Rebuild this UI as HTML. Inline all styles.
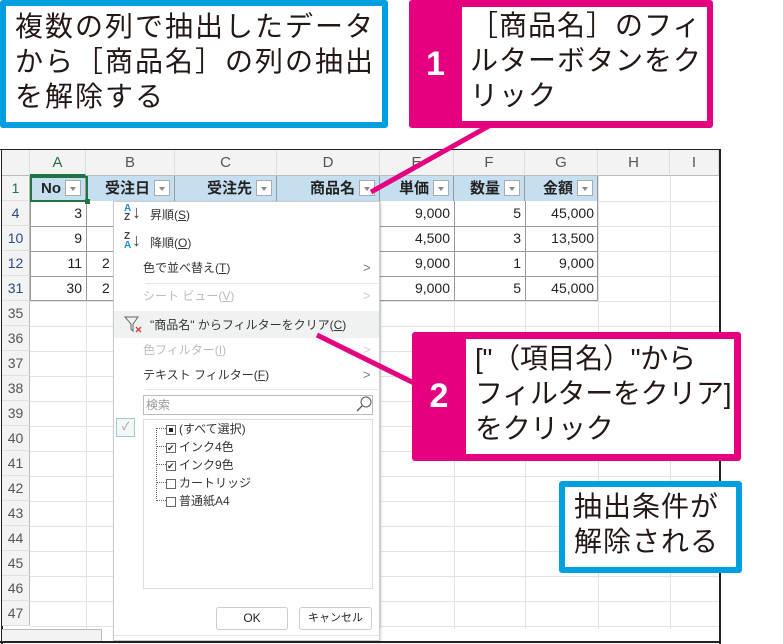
<!DOCTYPE html>
<html><head><meta charset="utf-8"><style>
*{margin:0;padding:0;box-sizing:border-box}
body{width:783px;height:644px;background:#fff;position:relative;overflow:hidden;font-family:"Liberation Sans","Noto Sans CJK JP",sans-serif;color:#222}
.a{position:absolute}
.callout{font-size:28px;line-height:35px;color:#231815;letter-spacing:0.5px}
.hdr{position:absolute;top:150px;height:26px;background:#f3f3f3;color:#555;font-size:15px;text-align:center;line-height:26px;border-right:1px solid #ddd;border-bottom:1px solid #bbb}
.rn{position:absolute;left:2px;width:28px;height:25px;background:#f3f3f3;color:#2b4a80;font-size:14px;text-align:center;line-height:25px;border-bottom:1px solid #e0e0e0;border-right:1px solid #bbb}
.gl{position:absolute;background:#e3e3e3}
.cell{position:absolute;height:25px;line-height:25px;font-size:14px;text-align:right;padding-right:4px;color:#222}
.th{position:absolute;top:176px;height:25px;background:#c5dff0;font-size:15px;font-weight:bold;line-height:25px;text-align:right;border-right:1px solid #999}
.dd{display:inline-block;width:16px;height:16px;border:1px solid #aaa;background:#fff;vertical-align:middle;margin:0 4px 2px 4px;position:relative}
.dd:after{content:"";position:absolute;left:4px;top:6px;border:3px solid transparent;border-top:4px solid #888}
.mi{position:absolute;left:143px;font-size:12px;color:#333;height:20px;line-height:20px}
.dis{color:#bbb}
.arr{position:absolute;left:363px;font-size:13px;color:#777}
.cb{display:inline-block;width:10px;height:10px;border:1px solid #666;vertical-align:middle;margin-right:3px;position:relative;background:#fff}
</style></head><body>

<div class="a" style="left:0;top:149px;width:721px;height:1px;background:#222"></div>
<div class="a" style="left:1px;top:149px;width:2px;height:495px;background:#222"></div>
<div class="a" style="left:719px;top:149px;width:2px;height:495px;background:#222"></div>
<div class="a" style="left:0;top:641px;width:721px;height:2px;background:#222"></div>

<div class="hdr" style="left:2px;width:28px"></div>
<div class="hdr" style="left:30px;width:56px;color:#217346;border-bottom:2px solid #217346">A</div>
<div class="hdr" style="left:86px;width:89px">B</div>
<div class="hdr" style="left:175px;width:102px">C</div>
<div class="hdr" style="left:277px;width:103px">D</div>
<div class="hdr" style="left:380px;width:74px">E</div>
<div class="hdr" style="left:454px;width:71px">F</div>
<div class="hdr" style="left:525px;width:73px">G</div>
<div class="hdr" style="left:598px;width:72px">H</div>
<div class="hdr" style="left:670px;width:49px">I</div>

<div class="gl" style="left:86px;top:176px;width:1px;height:453px"></div>
<div class="gl" style="left:175px;top:176px;width:1px;height:453px"></div>
<div class="gl" style="left:277px;top:176px;width:1px;height:453px"></div>
<div class="gl" style="left:380px;top:176px;width:1px;height:453px"></div>
<div class="gl" style="left:454px;top:176px;width:1px;height:453px"></div>
<div class="gl" style="left:525px;top:176px;width:1px;height:453px"></div>
<div class="gl" style="left:598px;top:176px;width:1px;height:453px"></div>
<div class="gl" style="left:670px;top:176px;width:1px;height:453px"></div>

<div class="rn" style="top:176px;color:#217346">1</div>
<div class="rn" style="top:201px">4</div>
<div class="rn" style="top:226px">10</div>
<div class="rn" style="top:251px">12</div>
<div class="rn" style="top:276px">31</div>
<div class="rn" style="top:301px;color:#555">35</div>
<div class="rn" style="top:326px;color:#555">36</div>
<div class="rn" style="top:351px;color:#555">37</div>
<div class="rn" style="top:376px;color:#555">38</div>
<div class="rn" style="top:401px;color:#555">39</div>
<div class="rn" style="top:426px;color:#555">40</div>
<div class="rn" style="top:451px;color:#555">41</div>
<div class="rn" style="top:476px;color:#555">42</div>
<div class="rn" style="top:501px;color:#555">43</div>
<div class="rn" style="top:526px;color:#555">44</div>
<div class="rn" style="top:551px;color:#555">45</div>
<div class="rn" style="top:576px;color:#555">46</div>
<div class="rn" style="top:601px;color:#555">47</div>
<div class="a" style="left:2px;top:629px;width:100px;height:12px;background:#f3f3f3;border-top:1px solid #bbb;border-right:1px solid #bbb"></div>

<div class="gl" style="left:30px;top:226px;width:689px;height:1px"></div>
<div class="gl" style="left:30px;top:251px;width:689px;height:1px"></div>
<div class="gl" style="left:30px;top:276px;width:689px;height:1px"></div>
<div class="gl" style="left:30px;top:301px;width:689px;height:1px"></div>
<div class="gl" style="left:30px;top:326px;width:689px;height:1px"></div>
<div class="gl" style="left:30px;top:351px;width:689px;height:1px"></div>
<div class="gl" style="left:30px;top:376px;width:689px;height:1px"></div>
<div class="gl" style="left:30px;top:401px;width:689px;height:1px"></div>
<div class="gl" style="left:30px;top:426px;width:689px;height:1px"></div>
<div class="gl" style="left:30px;top:451px;width:689px;height:1px"></div>
<div class="gl" style="left:30px;top:476px;width:689px;height:1px"></div>
<div class="gl" style="left:30px;top:501px;width:689px;height:1px"></div>
<div class="gl" style="left:30px;top:526px;width:689px;height:1px"></div>
<div class="gl" style="left:30px;top:551px;width:689px;height:1px"></div>
<div class="gl" style="left:30px;top:576px;width:689px;height:1px"></div>
<div class="gl" style="left:30px;top:601px;width:689px;height:1px"></div>
<div class="gl" style="left:30px;top:626px;width:689px;height:1px"></div>
<div class="gl" style="left:598px;top:201px;width:121px;height:1px"></div>

<div class="a" style="left:30px;top:201px;width:568px;height:100px;border:1px solid #999;border-top:none"></div>
<div class="a" style="left:86px;top:201px;width:1px;height:100px;background:#999"></div>
<div class="a" style="left:454px;top:201px;width:1px;height:100px;background:#999"></div>
<div class="a" style="left:525px;top:201px;width:1px;height:100px;background:#999"></div>
<div class="a" style="left:30px;top:226px;width:568px;height:1px;background:#999"></div>
<div class="a" style="left:30px;top:251px;width:568px;height:1px;background:#999"></div>
<div class="a" style="left:30px;top:276px;width:568px;height:1px;background:#999"></div>

<div class="th" style="left:30px;width:56px">No<span class="dd"></span></div>
<div class="th" style="left:86px;width:89px">受注日<span class="dd"></span></div>
<div class="th" style="left:175px;width:102px">受注先<span class="dd"></span></div>
<div class="th" style="left:277px;width:103px">商品名<span class="dd"></span></div>
<div class="th" style="left:380px;width:74px">単価<span class="dd"></span></div>
<div class="th" style="left:454px;width:71px">数量<span class="dd"></span></div>
<div class="th" style="left:525px;width:73px">金額<span class="dd"></span></div>
<div class="a" style="left:30px;top:176px;width:58px;height:26px;border:2px solid #217346"></div>
<div class="a" style="left:85px;top:199px;width:5px;height:5px;background:#217346"></div>

<div class="cell" style="left:30px;top:201px;width:56px">3</div>
<div class="cell" style="left:30px;top:226px;width:56px">9</div>
<div class="cell" style="left:30px;top:251px;width:56px">11</div>
<div class="cell" style="left:30px;top:276px;width:56px">30</div>
<div class="a" style="left:102px;top:251px;font-size:14px;line-height:25px">2</div>
<div class="a" style="left:102px;top:276px;font-size:14px;line-height:25px">2</div>
<div class="cell" style="left:380px;top:201px;width:74px">9,000</div>
<div class="cell" style="left:380px;top:226px;width:74px">4,500</div>
<div class="cell" style="left:380px;top:251px;width:74px">9,000</div>
<div class="cell" style="left:380px;top:276px;width:74px">9,000</div>
<div class="cell" style="left:454px;top:201px;width:71px">5</div>
<div class="cell" style="left:454px;top:226px;width:71px">3</div>
<div class="cell" style="left:454px;top:251px;width:71px">1</div>
<div class="cell" style="left:454px;top:276px;width:71px">5</div>
<div class="cell" style="left:525px;top:201px;width:73px">45,000</div>
<div class="cell" style="left:525px;top:226px;width:73px">13,500</div>
<div class="cell" style="left:525px;top:251px;width:73px">9,000</div>
<div class="cell" style="left:525px;top:276px;width:73px">45,000</div>

<div class="a" style="left:113px;top:201px;width:267px;height:440px;background:#fff;border:1px solid #ccc;box-shadow:1px 1px 3px rgba(0,0,0,.15)"></div>
<div class="a" style="left:114px;top:311px;width:265px;height:27px;background:#eef3f1"></div>
<div class="a" style="left:145px;top:283px;width:233px;height:1px;background:#e5e5e5"></div>
<div class="a" style="left:145px;top:389px;width:233px;height:1px;background:#e5e5e5"></div>
<div class="a" style="left:124px;top:204px;font-size:10px;line-height:9px;font-weight:bold;color:#1b8fd6">A<br><span style="color:#444">Z</span></div>
<div class="a" style="left:132px;top:202px;font-size:18px;line-height:20px;color:#444">↓</div>
<div class="a" style="left:124px;top:232px;font-size:10px;line-height:9px;font-weight:bold;color:#444">Z<br><span style="color:#1b8fd6">A</span></div>
<div class="a" style="left:132px;top:230px;font-size:18px;line-height:20px;color:#444">↓</div>
<div class="mi" style="left:150px;top:205px">昇順(<u>S</u>)</div>
<div class="mi" style="left:150px;top:233px">降順(<u>O</u>)</div>
<div class="mi" style="top:258px">色で並べ替え(<u>T</u>)</div><div class="arr" style="top:260px">&gt;</div>
<div class="mi dis" style="top:286px">シート ビュー(<u>V</u>)</div><div class="arr dis" style="top:288px;color:#ccc">&gt;</div>
<svg class="a" style="left:124px;top:316px" width="20" height="18"><path d="M1 1 H14 L9 8 V15 L7 13 V8 Z" fill="none" stroke="#666" stroke-width="1"/><path d="M12 11 L17 16 M17 11 L12 16" stroke="#e33" stroke-width="1.3"/></svg>
<div class="mi" style="left:150px;top:315px">"商品名" からフィルターをクリア(<u>C</u>)</div>
<div class="mi dis" style="top:340px">色フィルター(<u>I</u>)</div><div class="arr" style="top:342px;color:#ccc">&gt;</div>
<div class="mi" style="top:365px">テキスト フィルター(<u>F</u>)</div><div class="arr" style="top:367px">&gt;</div>
<div class="a" style="left:143px;top:395px;width:230px;height:20px;border:1px solid #bbb;font-size:12px;color:#999;line-height:18px;padding-left:2px">検索</div>
<svg class="a" style="left:356px;top:396px" width="16" height="17"><circle cx="10" cy="6" r="5" fill="none" stroke="#555"/><path d="M6 10 L1 15" stroke="#555" stroke-width="1.3"/></svg>
<div class="a" style="left:116px;top:418px;width:19px;height:19px;border:1px solid #9cc;background:#f3f7f5;color:#999;font-size:11px;text-align:center;line-height:17px">✓</div>
<div class="a" style="left:143px;top:419px;width:230px;height:170px;border:1px solid #ddd"></div>
<div class="a" style="left:156px;top:428px;width:1px;height:73px;border-left:1px dotted #666"></div>
<div class="a" style="left:156px;top:428px;width:10px;border-top:1px dotted #666"></div>
<div class="a" style="left:156px;top:446px;width:10px;border-top:1px dotted #666"></div>
<div class="a" style="left:156px;top:464px;width:10px;border-top:1px dotted #666"></div>
<div class="a" style="left:156px;top:482px;width:10px;border-top:1px dotted #666"></div>
<div class="a" style="left:156px;top:500px;width:10px;border-top:1px dotted #666"></div>
<div class="mi" style="left:166px;top:419px"><span class="cb"><span style="position:absolute;left:2px;top:2px;width:4px;height:4px;background:#222"></span></span>(すべて選択)</div>
<div class="mi" style="left:166px;top:437px"><span class="cb" style="font-size:9px;line-height:8px">✔</span>インク4色</div>
<div class="mi" style="left:166px;top:455px"><span class="cb" style="font-size:9px;line-height:8px">✔</span>インク9色</div>
<div class="mi" style="left:166px;top:473px"><span class="cb"></span>カートリッジ</div>
<div class="mi" style="left:166px;top:491px"><span class="cb"></span>普通紙A4</div>
<div class="a" style="left:216px;top:607px;width:72px;height:23px;border:1px solid #ccc;border-radius:3px;font-size:12px;text-align:center;line-height:21px">OK</div>
<div class="a" style="left:299px;top:607px;width:73px;height:23px;border:1px solid #ccc;border-radius:3px;font-size:11px;text-align:center;line-height:21px">キャンセル</div>
<div class="a" style="left:114px;top:635px;width:265px;height:1px;background:#e5e5e5"></div>

<svg class="a" style="left:0;top:0" width="783" height="644"><path d="M489 126 L371 192" stroke="#e4007f" stroke-width="5"/><path d="M317 335 L416 384" stroke="#e4007f" stroke-width="5"/></svg>

<div class="a callout" style="left:0;top:0;width:388px;height:128px;border:6px solid #00a0e0;border-radius:3px;background:#fff;padding:3px 0 0 9px;letter-spacing:2px">複数の列で抽出したデータ<br>から［商品名］の列の抽出<br>を解除する</div>

<div class="a" style="left:409px;top:0;width:304px;height:128px;background:#e4007f;border-radius:3px"></div>
<div class="a" style="left:462px;top:7px;width:245px;height:114px;background:#fff"></div>
<div class="a" style="left:409px;top:45px;width:53px;text-align:center;color:#fff;font-size:34px;font-weight:bold">1</div>
<div class="a callout" style="left:470px;top:8px;letter-spacing:1px">［商品名］のフィ<br>ルターボタンをク<br>リック</div>

<div class="a" style="left:412px;top:332px;width:329px;height:129px;background:#e4007f;border-radius:3px"></div>
<div class="a" style="left:466px;top:339px;width:268px;height:115px;background:#fff"></div>
<div class="a" style="left:412px;top:377px;width:54px;text-align:center;color:#fff;font-size:34px;font-weight:bold">2</div>
<div class="a callout" style="left:475px;top:341px;letter-spacing:-0.3px">["（項目名）"から<br>フィルターをクリア]<br>をクリック</div>

<div class="a callout" style="left:559px;top:481px;width:183px;height:92px;border:6px solid #00a0e0;border-radius:3px;background:#fff;padding:2px 0 0 9px;letter-spacing:1px">抽出条件が<br>解除される</div>

</body></html>
